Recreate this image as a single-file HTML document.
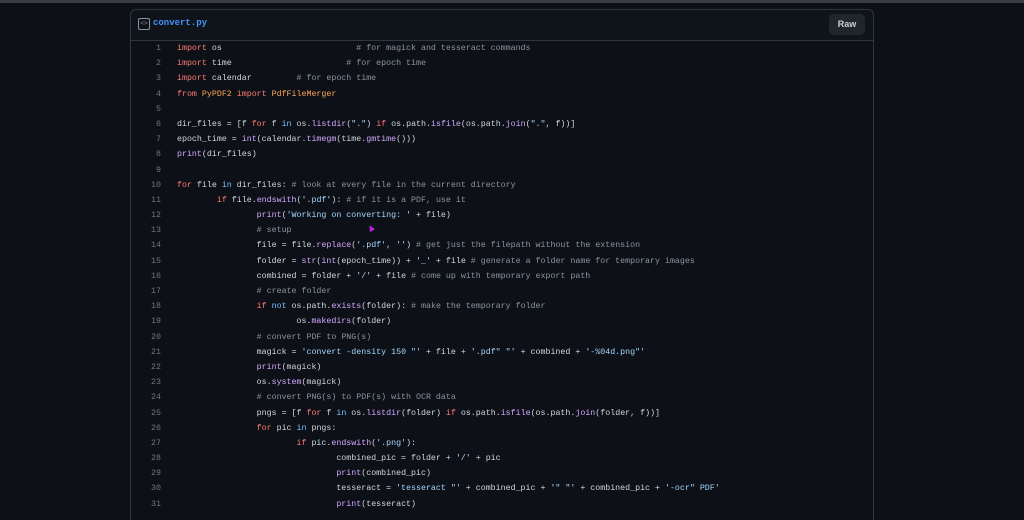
<!DOCTYPE html>
<html><head><meta charset="utf-8"><style>
html,body{margin:0;padding:0;background:#0d1117;width:1024px;height:512px;overflow:hidden}
.top{position:absolute;left:0;top:0;width:1024px;height:3px;background:#3a3d42}
.box{position:absolute;left:130px;top:9px;width:742px;height:510px;border:1px solid #30363d;border-bottom:none;border-radius:6px 6px 0 0;background:#0d1117;overflow:hidden}
.hdr{height:30px;border-bottom:1px solid #30363d;background:#0f141b;border-radius:6px 6px 0 0;position:relative}
.ico{position:absolute;left:7px;top:8px;width:10px;height:10px;border:1px solid #8b949e;border-radius:2px;color:#8b949e;font:6px "Liberation Mono",monospace;line-height:10px;text-align:center}
.fn{position:absolute;left:22px;top:8px;font:bold 9px "Liberation Mono",monospace;color:#4493f8}
.raw{position:absolute;right:8px;top:4px;width:36px;height:21px;background:#21262d;border-radius:5px;color:#c9d1d9;font:bold 9px "Liberation Sans",sans-serif;text-align:center;line-height:21px}
.code{position:absolute;left:0;top:31px;font:8.3px "Liberation Mono",monospace;color:#d0d7de}
.l{height:15.2px;line-height:15.2px;position:relative}
.n{position:absolute;left:0;width:30px;text-align:right;color:#6e7681}
.t{position:absolute;left:46px;white-space:pre;tab-size:8;-moz-tab-size:8}
.k{color:#ff7b72}.f{color:#d2a8ff}.s{color:#a5d6ff}.c{color:#8b949e}.b{color:#79c0ff}.o{color:#ffa657}
.cur{position:absolute;left:368px;top:225px;width:0;height:0;border-left:3px solid transparent;border-right:3px solid transparent;border-bottom:6px solid #c020e0;transform:rotate(-30deg)}
</style></head><body>
<div class="top"></div>
<div class="box">
<div class="hdr"><div class="ico">&lt;&gt;</div><div class="fn">convert.py</div><div class="raw">Raw</div></div>
<div class="code">
<div class="l"><span class="n">1</span><span class="t"><span class="k">import</span> os                           <span class="c"># for magick and tesseract commands</span></span></div>
<div class="l"><span class="n">2</span><span class="t"><span class="k">import</span> time                       <span class="c"># for epoch time</span></span></div>
<div class="l"><span class="n">3</span><span class="t"><span class="k">import</span> calendar         <span class="c"># for epoch time</span></span></div>
<div class="l"><span class="n">4</span><span class="t"><span class="k">from</span> <span class="o">PyPDF2</span> <span class="k">import</span> <span class="o">PdfFileMerger</span></span></div>
<div class="l"><span class="n">5</span><span class="t"></span></div>
<div class="l"><span class="n">6</span><span class="t">dir_files = [f <span class="k">for</span> f <span class="b">in</span> os.<span class="f">listdir</span>(<span class="s">"."</span>) <span class="k">if</span> os.path.<span class="f">isfile</span>(os.path.<span class="f">join</span>(<span class="s">"."</span>, f))]</span></div>
<div class="l"><span class="n">7</span><span class="t">epoch_time = <span class="f">int</span>(calendar.<span class="f">timegm</span>(time.<span class="f">gmtime</span>()))</span></div>
<div class="l"><span class="n">8</span><span class="t"><span class="f">print</span>(dir_files)</span></div>
<div class="l"><span class="n">9</span><span class="t"></span></div>
<div class="l"><span class="n">10</span><span class="t"><span class="k">for</span> file <span class="b">in</span> dir_files: <span class="c"># look at every file in the current directory</span></span></div>
<div class="l"><span class="n">11</span><span class="t">	<span class="k">if</span> file.<span class="f">endswith</span>(<span class="s">'.pdf'</span>): <span class="c"># if it is a PDF, use it</span></span></div>
<div class="l"><span class="n">12</span><span class="t">		<span class="f">print</span>(<span class="s">'Working on converting: '</span> + file)</span></div>
<div class="l"><span class="n">13</span><span class="t">		<span class="c"># setup</span></span></div>
<div class="l"><span class="n">14</span><span class="t">		file = file.<span class="f">replace</span>(<span class="s">'.pdf'</span>, <span class="s">''</span>) <span class="c"># get just the filepath without the extension</span></span></div>
<div class="l"><span class="n">15</span><span class="t">		folder = <span class="f">str</span>(<span class="f">int</span>(epoch_time)) + <span class="s">'_'</span> + file <span class="c"># generate a folder name for temporary images</span></span></div>
<div class="l"><span class="n">16</span><span class="t">		combined = folder + <span class="s">'/'</span> + file <span class="c"># come up with temporary export path</span></span></div>
<div class="l"><span class="n">17</span><span class="t">		<span class="c"># create folder</span></span></div>
<div class="l"><span class="n">18</span><span class="t">		<span class="k">if</span> <span class="b">not</span> os.path.<span class="f">exists</span>(folder): <span class="c"># make the temporary folder</span></span></div>
<div class="l"><span class="n">19</span><span class="t">			os.<span class="f">makedirs</span>(folder)</span></div>
<div class="l"><span class="n">20</span><span class="t">		<span class="c"># convert PDF to PNG(s)</span></span></div>
<div class="l"><span class="n">21</span><span class="t">		magick = <span class="s">'convert -density 150 "'</span> + file + <span class="s">'.pdf" "'</span> + combined + <span class="s">'-%04d.png"'</span></span></div>
<div class="l"><span class="n">22</span><span class="t">		<span class="f">print</span>(magick)</span></div>
<div class="l"><span class="n">23</span><span class="t">		os.<span class="f">system</span>(magick)</span></div>
<div class="l"><span class="n">24</span><span class="t">		<span class="c"># convert PNG(s) to PDF(s) with OCR data</span></span></div>
<div class="l"><span class="n">25</span><span class="t">		pngs = [f <span class="k">for</span> f <span class="b">in</span> os.<span class="f">listdir</span>(folder) <span class="k">if</span> os.path.<span class="f">isfile</span>(os.path.<span class="f">join</span>(folder, f))]</span></div>
<div class="l"><span class="n">26</span><span class="t">		<span class="k">for</span> pic <span class="b">in</span> pngs:</span></div>
<div class="l"><span class="n">27</span><span class="t">			<span class="k">if</span> pic.<span class="f">endswith</span>(<span class="s">'.png'</span>):</span></div>
<div class="l"><span class="n">28</span><span class="t">				combined_pic = folder + <span class="s">'/'</span> + pic</span></div>
<div class="l"><span class="n">29</span><span class="t">				<span class="f">print</span>(combined_pic)</span></div>
<div class="l"><span class="n">30</span><span class="t">				tesseract = <span class="s">'tesseract "'</span> + combined_pic + <span class="s">'" "'</span> + combined_pic + <span class="s">'-ocr" PDF'</span></span></div>
<div class="l"><span class="n">31</span><span class="t">				<span class="f">print</span>(tesseract)</span></div>
</div>
</div>
<div class="cur"></div>
</body></html>
